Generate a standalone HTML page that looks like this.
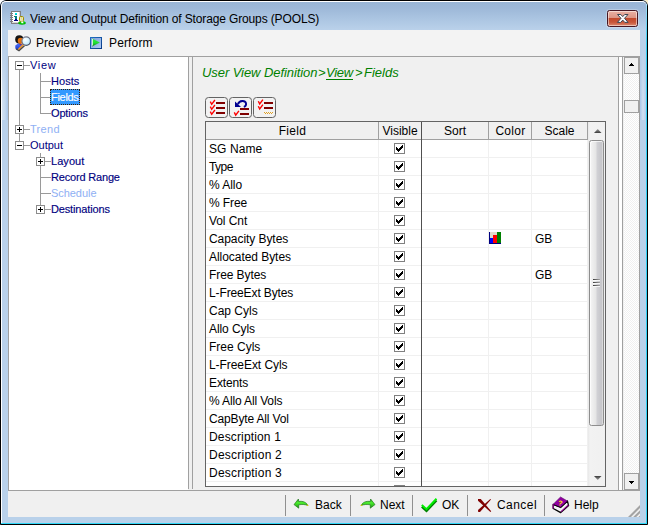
<!DOCTYPE html>
<html><head><meta charset="utf-8"><title>View and Output Definition of Storage Groups (POOLS)</title>
<style>
html,body{margin:0;padding:0;}
body{width:648px;height:525px;overflow:hidden;background:#fff;font-family:"Liberation Sans",Arial,sans-serif;font-size:12px;color:#000;position:relative;}
div,span,i,b,svg{position:absolute;box-sizing:border-box;}
svg{overflow:visible;}
#win{left:0;top:0;width:648px;height:525px;border-radius:6px 6px 0 0;overflow:hidden;
 background:linear-gradient(to bottom,#98b4d5 0px,#9db8d8 8px,#aac4e1 18px,#bad1ea 30px,#b9d1ea 100%);}
#win .edge{left:0;top:0;right:0;bottom:0;border:1px solid #000;border-radius:6px 6px 0 0;}
#win .wl{left:1px;top:1px;width:646px;height:523px;border-radius:5px 5px 0 0;border-left:1px solid #fff;border-top:1px solid #fff;}
#win .cr{left:646px;top:4px;width:1px;height:520px;background:linear-gradient(to bottom,#a8e0f8 0,#30d0f6 40px,#30d4f8 100%);}
#win .cb2{left:1px;top:523px;width:646px;height:1px;background:#30d8f8;}
#win .gl{top:44px;height:76px;width:6px;-webkit-mask-image:linear-gradient(to bottom,transparent 0,#000 75%);mask-image:linear-gradient(to bottom,transparent 0,#000 75%);}
#title{left:30px;top:10px;font-size:12px;line-height:18px;letter-spacing:-0.13px;white-space:nowrap;color:#000;}
#close{left:607px;top:10px;width:31px;height:17px;border:1px solid #471622;border-radius:2.5px;
 background:linear-gradient(to bottom,#e9b0a3 0%,#dc9484 47%,#c2492c 50%,#c8563a 75%,#dd8a70 100%);box-shadow:inset 0 0 0 1px rgba(255,255,255,.5),0 0 0 1px rgba(255,255,255,.25);}
#client{left:8px;top:30px;width:632px;height:487px;background:#f0f0f0;}
.tb{top:36px;font-size:12px;line-height:14px;white-space:nowrap;}
#tree{left:8px;top:56px;width:180px;height:434px;background:#fff;border-left:1px solid #a0a0a0;border-top:1px solid #a0a0a0;}
.tn{white-space:nowrap;color:#000080;line-height:16px;height:16px;font-size:11px;}
.t1{left:30px;letter-spacing:-0.2px;}
.t2{left:51px;letter-spacing:-0.2px;-webkit-text-stroke:0.15px #000080;}
.dis{color:#8fb0f4;}
.t2.dis{-webkit-text-stroke:0 transparent;}
.ln{background:#9a9a9a;}
.box{width:9px;height:9px;border:1px solid #8c8c8c;background:#fff;}
.box i{left:1px;top:3px;width:5px;height:1px;background:#000;}
.box b{left:3px;top:1px;width:1px;height:5px;background:#000;}
.hd{top:65px;font-size:13px;font-style:italic;color:#008000;line-height:16px;white-space:nowrap;}
.ib{top:97px;width:23px;height:21px;border:1px solid #646464;border-radius:3.5px;background:#f2f2f2;}
#grid{left:205px;top:121px;width:401px;height:366px;border:1px solid #646464;background:#fff;overflow:hidden;}
.hc{top:0;height:18px;line-height:18px;text-align:center;font-size:12px;background:#f0f0f0;border-right:1px solid #a0a0a0;border-bottom:1px solid #a0a0a0;}
.row{left:0;width:382px;height:18px;border-bottom:1px solid #f0f0f0;}
.row span{left:3px;top:0;line-height:18px;font-size:12px;white-space:nowrap;}
.cb{left:188px;top:3px;width:11px;height:11px;border:1px solid #808080;background:#fff;}
.vl{top:18px;width:1px;bottom:0;background:#f0f0f0;}
.btn{top:498px;font-size:12px;line-height:14px;white-space:nowrap;}
.sep{top:495px;width:1px;height:21px;background:#909090;}
.trk{background-color:#fff;background-image:linear-gradient(45deg,#f0f0f0 25%,transparent 25%,transparent 75%,#f0f0f0 75%),linear-gradient(45deg,#f0f0f0 25%,transparent 25%,transparent 75%,#f0f0f0 75%);background-size:2px 2px;background-position:0 0,1px 1px;}
.sbb{left:624px;width:16px;height:17px;background:#f0f0f0;border:1px solid #a0a0a0;border-right-width:2px;}
</style></head><body>
<div style="left:644px;top:0;width:4px;height:4px;background:#fdf0c8"></div>
<div id="win"><div class="gl" style="left:2px;background:linear-gradient(to right,#d4e2f2,#c4d8ee 50%,#a9c5e8)"></div><div class="gl" style="left:640px;background:linear-gradient(to right,#a9c5e8,#d2e0f1 50%,#b4cceb)"></div><div class="edge"></div><div class="wl"></div><div class="cr"></div><div class="cb2"></div></div>
<svg style="left:10px;top:11px" width="16" height="14" viewBox="0 0 16 14" shape-rendering="crispEdges">
<rect x="1" y="0" width="10" height="13" fill="#808080"/><rect x="2" y="1" width="8" height="11" fill="#fff"/>
<rect x="9" y="1" width="1" height="11" fill="#d8d8d8"/><rect x="2" y="11" width="8" height="1" fill="#d8d8d8"/>
<g fill="#808080"><rect x="0" y="2" width="3" height="1"/><rect x="0" y="4" width="3" height="1"/><rect x="0" y="6" width="3" height="1"/><rect x="0" y="8" width="3" height="1"/><rect x="0" y="10" width="3" height="1"/></g>
<rect x="5" y="2" width="2" height="1" fill="#00e8e8"/><rect x="5" y="3" width="2" height="1" fill="#00c0c0"/>
<rect x="4" y="5" width="3" height="1" fill="#008080"/><rect x="5" y="6" width="2" height="2" fill="#008080"/>
<rect x="5" y="8" width="2" height="1" fill="#000080"/><rect x="4" y="9" width="4" height="1" fill="#000080"/>
<g shape-rendering="auto"><ellipse cx="12" cy="12" rx="3.8" ry="1.7" fill="#00b000"/><ellipse cx="12" cy="11.6" rx="3" ry="1" fill="#00d800"/>
<rect x="9.5" y="5.5" width="4" height="5" rx="1.2" fill="#e4e4d0" stroke="#a09000" stroke-width="1"/>
<rect x="11" y="6.5" width="1" height="1" fill="#f0e000"/><rect x="11.5" y="8.5" width="1" height="1" fill="#f0e000"/>
<path d="M11,10.5 L13,10.5 L13.5,12.3 L11.5,12.3 Z" fill="#fff"/></g>
</svg>
<div id="title">View and Output Definition of Storage Groups (POOLS)</div>
<div id="close"></div>
<svg style="left:617px;top:14px" width="12" height="9" viewBox="0 0 12 9">
<path d="M0.5,0.5 L3.8,0.5 L5.75,2.6 L7.7,0.5 L11,0.5 L7.5,4.3 L11.1,8.4 L7.8,8.4 L5.75,6.1 L3.7,8.4 L0.4,8.4 L4,4.3 Z" fill="#fbfbfc" stroke="#3b4654" stroke-width="1" stroke-linejoin="round"/></svg>
<div id="client"></div><div style="left:8px;top:30px;width:632px;height:26px;background:#f3f3f3"></div>
<svg style="left:15px;top:35px" width="16" height="16" viewBox="0 0 16 16">
<defs><radialGradient id="lens" cx="0.4" cy="0.35" r="0.7"><stop offset="0" stop-color="#fff"/><stop offset="0.6" stop-color="#d4f2ff"/><stop offset="1" stop-color="#a8dcf8"/></radialGradient>
<linearGradient id="rim" x1="0" y1="0" x2="1" y2="1"><stop offset="0" stop-color="#8a8c9c"/><stop offset="1" stop-color="#3e4050"/></linearGradient><linearGradient id="bod" x1="0" y1="0" x2="0" y2="1"><stop offset="0" stop-color="#4a6cff"/><stop offset="1" stop-color="#1c3cc0"/></linearGradient></defs>
<path d="M0.3,10.5 L3,8.6 L7.5,9 L8.5,11 L5,14.5 L2.5,15 L0.3,13.5 Z" fill="url(#bod)"/>
<path d="M1,14 L4,15.6 L9.5,10.8" fill="none" stroke="#4a4a4a" stroke-width="1.3"/>
<circle cx="4.3" cy="4.4" r="4.1" fill="#141414"/>
<ellipse cx="5.6" cy="5.8" rx="2.9" ry="3" fill="#e8730e"/>
<path d="M4.2,8.6 L6.8,8.9 L6.2,9.8 L4.6,9.6 Z" fill="#a01818"/>
<path d="M8.4,9.6 L3.8,14" stroke="#f59a23" stroke-width="1.5" stroke-linecap="round"/>
<circle cx="11.2" cy="6.1" r="4.3" fill="url(#lens)" stroke="url(#rim)" stroke-width="1.2"/>
</svg>
<div class="tb" style="left:36px">Preview</div>
<svg style="left:90px;top:37px" width="12" height="12" viewBox="0 0 12 12">
<defs><linearGradient id="pf" x1="0" y1="0" x2="1" y2="1"><stop offset="0" stop-color="#7f9cd6"/><stop offset="1" stop-color="#aecdf7"/></linearGradient>
<linearGradient id="pb" x1="0" y1="0" x2="1" y2="1"><stop offset="0" stop-color="#1f6fc4"/><stop offset="1" stop-color="#0a3a86"/></linearGradient>
<linearGradient id="pg" x1="0" y1="0" x2="0" y2="1"><stop offset="0" stop-color="#2cf040"/><stop offset="0.55" stop-color="#22dd33"/><stop offset="1" stop-color="#0c7a18"/></linearGradient></defs>
<rect x="0.5" y="0.5" width="11" height="11" fill="url(#pf)" stroke="url(#pb)" stroke-width="1"/>
<path d="M2,1.6 L9.9,5.6 L2,9.6 Z" fill="url(#pg)"/><rect x="2" y="2" width="0.8" height="6.6" fill="#f4fff4"/>
</svg>
<div class="tb" style="left:109px;letter-spacing:0.15px">Perform</div>
<div style="left:8px;top:56px;width:632px;height:1px;background:#a0a0a0"></div>
<div id="tree"></div>
<div class="ln" style="left:19px;top:70px;width:1px;height:71px"></div>
<div class="ln" style="left:24px;top:65px;width:6px;height:1px"></div>
<div class="ln" style="left:24px;top:129px;width:6px;height:1px"></div>
<div class="ln" style="left:24px;top:145px;width:6px;height:1px"></div>
<div class="box" style="left:15px;top:61px"><i></i></div>
<div class="box" style="left:15px;top:125px"><i></i><b></b></div>
<div class="box" style="left:15px;top:141px"><i></i></div>
<div class="ln" style="left:40px;top:73px;width:1px;height:41px"></div>
<div class="ln" style="left:40px;top:81px;width:11px;height:1px"></div>
<div class="ln" style="left:40px;top:97px;width:11px;height:1px"></div>
<div class="ln" style="left:40px;top:113px;width:11px;height:1px"></div>
<div class="ln" style="left:40px;top:153px;width:1px;height:57px"></div>
<div class="ln" style="left:40px;top:161px;width:11px;height:1px"></div>
<div class="ln" style="left:40px;top:177px;width:11px;height:1px"></div>
<div class="ln" style="left:40px;top:193px;width:11px;height:1px"></div>
<div class="ln" style="left:40px;top:209px;width:11px;height:1px"></div>
<div class="box" style="left:36px;top:157px"><i></i><b></b></div>
<div class="box" style="left:36px;top:205px"><i></i><b></b></div>
<div class="tn t1" style="top:57px;letter-spacing:0.7px">View</div>
<div class="tn t2" style="top:73px;letter-spacing:0.05px">Hosts</div>
<div style="left:50px;top:89px;width:30px;height:16px;background:#3399ff;border:1px dotted #402000"></div>
<div class="tn t2" style="top:89px;letter-spacing:-0.3px;color:#fff;-webkit-text-stroke:0.15px #fff">Fields</div>
<div class="tn t2" style="top:105px;letter-spacing:-0.15px">Options</div>
<div class="tn t1 dis" style="top:121px;letter-spacing:0.3px">Trend</div>
<div class="tn t1" style="top:137px;letter-spacing:0px">Output</div>
<div class="tn t2" style="top:153px;letter-spacing:0.05px">Layout</div>
<div class="tn t2" style="top:169px;letter-spacing:-0.18px">Record Range</div>
<div class="tn t2 dis" style="top:185px;letter-spacing:-0.05px">Schedule</div>
<div class="tn t2" style="top:201px;letter-spacing:-0.15px">Destinations</div>
<div style="left:188px;top:57px;width:1px;height:432px;background:#a0a0a0"></div>
<div style="left:192px;top:57px;width:1px;height:432px;background:#a0a0a0"></div>
<div class="hd" style="left:202px;letter-spacing:-0.07px">User View Definition</div>
<div class="hd" style="left:318px">&gt;</div>
<div class="hd" style="left:326px;letter-spacing:-0.3px">View</div><div style="left:326px;top:79px;width:27px;height:1px;background:#008000"></div>
<div class="hd" style="left:355px">&gt;</div>
<div class="hd" style="left:364px">Fields</div>
<div class="ib" style="left:205px"></div>
<svg style="left:205px;top:97px" width="23" height="21" viewBox="205 97 23 21"><path d="M210.3,101.6 l1.4,2.7 l3.2,-4.3" fill="none" stroke="#ff0000" stroke-width="1.4"/><path d="M210.3,106.6 l1.4,2.7 l3.2,-4.3" fill="none" stroke="#ff0000" stroke-width="1.4"/><path d="M210.3,111.6 l1.4,2.7 l3.2,-4.3" fill="none" stroke="#ff0000" stroke-width="1.4"/><rect x="216" y="102" width="9" height="2" fill="#800000" shape-rendering="crispEdges"/><rect x="216" y="107" width="9" height="2" fill="#800000" shape-rendering="crispEdges"/><rect x="216" y="112" width="9" height="2" fill="#800000" shape-rendering="crispEdges"/></svg>
<div class="ib" style="left:229px"></div>
<svg style="left:229px;top:97px" width="23" height="21" viewBox="229 97 23 21"><path d="M234.3,112.4 l1.4,2.7 l3.2,-4.3" fill="none" stroke="#ff0000" stroke-width="1.4"/><rect x="240" y="108" width="9" height="2" fill="#800000" shape-rendering="crispEdges"/><rect x="240" y="113" width="9" height="2" fill="#800000" shape-rendering="crispEdges"/><path d="M235,101.5 L235,107 L241,107 Z" fill="#000090"/><path d="M238,104.3 C239,100.4 245.9,99.6 246.1,104 C246.1,105.6 245.4,106.4 243.8,106.8" fill="none" stroke="#000090" stroke-width="1.9"/></svg>
<div class="ib" style="left:253px"></div>
<svg style="left:253px;top:97px" width="23" height="21" viewBox="253 97 23 21"><path d="M258.3,101.2 l1.4,2.7 l3.2,-4.3" fill="none" stroke="#ff0000" stroke-width="1.4"/><path d="M258.3,106.2 l1.4,2.7 l3.2,-4.3" fill="none" stroke="#ff0000" stroke-width="1.4"/><rect x="264" y="102" width="9" height="2" fill="#800000" shape-rendering="crispEdges"/><rect x="264" y="107" width="9" height="2" fill="#800000" shape-rendering="crispEdges"/><g fill="#e0a020" shape-rendering="crispEdges"><rect x="264" y="112" width="1" height="1"/><rect x="265" y="113" width="1" height="1"/><rect x="266" y="112" width="1" height="1"/><rect x="267" y="113" width="1" height="1"/><rect x="268" y="112" width="1" height="1"/><rect x="269" y="113" width="1" height="1"/><rect x="270" y="112" width="1" height="1"/><rect x="271" y="113" width="1" height="1"/><rect x="272" y="112" width="1" height="1"/></g></svg>
<div id="grid">
<div class="hc" style="left:0px;width:173px;letter-spacing:0.3px;padding-left:1px">Field</div>
<div class="hc" style="left:173px;width:43px">Visible</div>
<div class="hc" style="left:216px;width:67px">Sort</div>
<div class="hc" style="left:283px;width:43px;letter-spacing:0.3px;padding-left:1px">Color</div>
<div class="hc" style="left:326px;width:56px">Scale</div>
<div class="row" style="top:18px"><span style="letter-spacing:0.08px">SG Name</span><div class="cb"><svg style="left:1px;top:1px" width="7" height="7" viewBox="0 0 7 7" shape-rendering="crispEdges"><path d="M0,2h1v1h1v1h1v-1h1v-1h1v-1h1v-1h1v3h-1v1h-1v1h-1v1h-1v1h-1v-1h-1v-1h-1z" fill="#000"/></svg></div></div>
<div class="row" style="top:36px"><span style="letter-spacing:-0.55px">Type</span><div class="cb"><svg style="left:1px;top:1px" width="7" height="7" viewBox="0 0 7 7" shape-rendering="crispEdges"><path d="M0,2h1v1h1v1h1v-1h1v-1h1v-1h1v-1h1v3h-1v1h-1v1h-1v1h-1v1h-1v-1h-1v-1h-1z" fill="#000"/></svg></div></div>
<div class="row" style="top:54px"><span style="letter-spacing:-0.05px">% Allo</span><div class="cb"><svg style="left:1px;top:1px" width="7" height="7" viewBox="0 0 7 7" shape-rendering="crispEdges"><path d="M0,2h1v1h1v1h1v-1h1v-1h1v-1h1v-1h1v3h-1v1h-1v1h-1v1h-1v1h-1v-1h-1v-1h-1z" fill="#000"/></svg></div></div>
<div class="row" style="top:72px"><span style="letter-spacing:-0.1px">% Free</span><div class="cb"><svg style="left:1px;top:1px" width="7" height="7" viewBox="0 0 7 7" shape-rendering="crispEdges"><path d="M0,2h1v1h1v1h1v-1h1v-1h1v-1h1v-1h1v3h-1v1h-1v1h-1v1h-1v1h-1v-1h-1v-1h-1z" fill="#000"/></svg></div></div>
<div class="row" style="top:90px"><span style="letter-spacing:-0.08px">Vol Cnt</span><div class="cb"><svg style="left:1px;top:1px" width="7" height="7" viewBox="0 0 7 7" shape-rendering="crispEdges"><path d="M0,2h1v1h1v1h1v-1h1v-1h1v-1h1v-1h1v3h-1v1h-1v1h-1v1h-1v1h-1v-1h-1v-1h-1z" fill="#000"/></svg></div></div>
<div class="row" style="top:108px"><span style="letter-spacing:-0.06px">Capacity Bytes</span><div class="cb"><svg style="left:1px;top:1px" width="7" height="7" viewBox="0 0 7 7" shape-rendering="crispEdges"><path d="M0,2h1v1h1v1h1v-1h1v-1h1v-1h1v-1h1v3h-1v1h-1v1h-1v1h-1v1h-1v-1h-1v-1h-1z" fill="#000"/></svg></div><span style="left:329px">GB</span><svg style="left:283px;top:2px" width="12" height="12" viewBox="0 0 12 12" shape-rendering="crispEdges"><rect x="0" y="0" width="12" height="12" fill="#000080"/><rect x="1" y="0" width="7" height="6" fill="#e0dccc"/><rect x="1" y="6" width="3" height="5" fill="#0000ff"/><rect x="4" y="3" width="4" height="8" fill="#ff0000"/><rect x="8" y="0" width="4" height="11" fill="#008000"/></svg></div>
<div class="row" style="top:126px"><span style="letter-spacing:-0.05px">Allocated Bytes</span><div class="cb"><svg style="left:1px;top:1px" width="7" height="7" viewBox="0 0 7 7" shape-rendering="crispEdges"><path d="M0,2h1v1h1v1h1v-1h1v-1h1v-1h1v-1h1v3h-1v1h-1v1h-1v1h-1v1h-1v-1h-1v-1h-1z" fill="#000"/></svg></div></div>
<div class="row" style="top:144px"><span style="letter-spacing:-0.08px">Free Bytes</span><div class="cb"><svg style="left:1px;top:1px" width="7" height="7" viewBox="0 0 7 7" shape-rendering="crispEdges"><path d="M0,2h1v1h1v1h1v-1h1v-1h1v-1h1v-1h1v3h-1v1h-1v1h-1v1h-1v1h-1v-1h-1v-1h-1z" fill="#000"/></svg></div><span style="left:329px">GB</span></div>
<div class="row" style="top:162px"><span style="letter-spacing:-0.12px">L-FreeExt Bytes</span><div class="cb"><svg style="left:1px;top:1px" width="7" height="7" viewBox="0 0 7 7" shape-rendering="crispEdges"><path d="M0,2h1v1h1v1h1v-1h1v-1h1v-1h1v-1h1v3h-1v1h-1v1h-1v1h-1v1h-1v-1h-1v-1h-1z" fill="#000"/></svg></div></div>
<div class="row" style="top:180px"><span>Cap Cyls</span><div class="cb"><svg style="left:1px;top:1px" width="7" height="7" viewBox="0 0 7 7" shape-rendering="crispEdges"><path d="M0,2h1v1h1v1h1v-1h1v-1h1v-1h1v-1h1v3h-1v1h-1v1h-1v1h-1v1h-1v-1h-1v-1h-1z" fill="#000"/></svg></div></div>
<div class="row" style="top:198px"><span style="letter-spacing:-0.09px">Allo Cyls</span><div class="cb"><svg style="left:1px;top:1px" width="7" height="7" viewBox="0 0 7 7" shape-rendering="crispEdges"><path d="M0,2h1v1h1v1h1v-1h1v-1h1v-1h1v-1h1v3h-1v1h-1v1h-1v1h-1v1h-1v-1h-1v-1h-1z" fill="#000"/></svg></div></div>
<div class="row" style="top:216px"><span>Free Cyls</span><div class="cb"><svg style="left:1px;top:1px" width="7" height="7" viewBox="0 0 7 7" shape-rendering="crispEdges"><path d="M0,2h1v1h1v1h1v-1h1v-1h1v-1h1v-1h1v3h-1v1h-1v1h-1v1h-1v1h-1v-1h-1v-1h-1z" fill="#000"/></svg></div></div>
<div class="row" style="top:234px"><span style="letter-spacing:-0.06px">L-FreeExt Cyls</span><div class="cb"><svg style="left:1px;top:1px" width="7" height="7" viewBox="0 0 7 7" shape-rendering="crispEdges"><path d="M0,2h1v1h1v1h1v-1h1v-1h1v-1h1v-1h1v3h-1v1h-1v1h-1v1h-1v1h-1v-1h-1v-1h-1z" fill="#000"/></svg></div></div>
<div class="row" style="top:252px"><span style="letter-spacing:-0.12px">Extents</span><div class="cb"><svg style="left:1px;top:1px" width="7" height="7" viewBox="0 0 7 7" shape-rendering="crispEdges"><path d="M0,2h1v1h1v1h1v-1h1v-1h1v-1h1v-1h1v3h-1v1h-1v1h-1v1h-1v1h-1v-1h-1v-1h-1z" fill="#000"/></svg></div></div>
<div class="row" style="top:270px"><span style="letter-spacing:-0.14px">% Allo All Vols</span><div class="cb"><svg style="left:1px;top:1px" width="7" height="7" viewBox="0 0 7 7" shape-rendering="crispEdges"><path d="M0,2h1v1h1v1h1v-1h1v-1h1v-1h1v-1h1v3h-1v1h-1v1h-1v1h-1v1h-1v-1h-1v-1h-1z" fill="#000"/></svg></div></div>
<div class="row" style="top:288px"><span style="letter-spacing:-0.16px">CapByte All Vol</span><div class="cb"><svg style="left:1px;top:1px" width="7" height="7" viewBox="0 0 7 7" shape-rendering="crispEdges"><path d="M0,2h1v1h1v1h1v-1h1v-1h1v-1h1v-1h1v3h-1v1h-1v1h-1v1h-1v1h-1v-1h-1v-1h-1z" fill="#000"/></svg></div></div>
<div class="row" style="top:306px"><span style="letter-spacing:0.15px">Description 1</span><div class="cb"><svg style="left:1px;top:1px" width="7" height="7" viewBox="0 0 7 7" shape-rendering="crispEdges"><path d="M0,2h1v1h1v1h1v-1h1v-1h1v-1h1v-1h1v3h-1v1h-1v1h-1v1h-1v1h-1v-1h-1v-1h-1z" fill="#000"/></svg></div></div>
<div class="row" style="top:324px"><span style="letter-spacing:0.23px">Description 2</span><div class="cb"><svg style="left:1px;top:1px" width="7" height="7" viewBox="0 0 7 7" shape-rendering="crispEdges"><path d="M0,2h1v1h1v1h1v-1h1v-1h1v-1h1v-1h1v3h-1v1h-1v1h-1v1h-1v1h-1v-1h-1v-1h-1z" fill="#000"/></svg></div></div>
<div class="row" style="top:342px"><span style="letter-spacing:0.23px">Description 3</span><div class="cb"><svg style="left:1px;top:1px" width="7" height="7" viewBox="0 0 7 7" shape-rendering="crispEdges"><path d="M0,2h1v1h1v1h1v-1h1v-1h1v-1h1v-1h1v3h-1v1h-1v1h-1v1h-1v1h-1v-1h-1v-1h-1z" fill="#000"/></svg></div></div>
<div class="row" style="top:360px"><span></span><div class="cb"><svg style="left:1px;top:1px" width="7" height="7" viewBox="0 0 7 7" shape-rendering="crispEdges"><path d="M0,2h1v1h1v1h1v-1h1v-1h1v-1h1v-1h1v3h-1v1h-1v1h-1v1h-1v1h-1v-1h-1v-1h-1z" fill="#000"/></svg></div></div>
<div class="vl" style="left:172px"></div>
<div class="vl" style="left:282px"></div>
<div class="vl" style="left:325px"></div>
<div class="vl" style="left:381px"></div>
<div style="left:215px;top:0;width:1px;bottom:0;background:#505050"></div>
<div style="left:381px;top:0;width:1px;height:18px;background:#a0a0a0"></div>
<div style="left:382px;top:0;width:17px;bottom:0;background:linear-gradient(to right,#e8e8e8 0,#f2f2f2 2px,#f0f0f0 100%)"></div>
<div style="left:383px;top:18px;width:15px;height:286px;border:1px solid #8e8e8e;border-radius:2.5px;background:linear-gradient(to right,#f6f6f6 0,#e4e4e4 48%,#d2d2d6 52%,#c6c6ca 88%,#e4e4e4 100%);box-shadow:inset 1px 1px 0 rgba(255,255,255,.7)"></div>
<svg style="left:387px;top:157px" width="8" height="8" viewBox="0 0 8 8" shape-rendering="crispEdges"><defs><linearGradient id="gr" x1="0" y1="0" x2="1" y2="0"><stop offset="0" stop-color="#3c3c3c"/><stop offset="1" stop-color="#a4a4a4"/></linearGradient></defs><g fill="url(#gr)"><rect x="0" y="0" width="7" height="1"/><rect x="0" y="3" width="7" height="1"/><rect x="0" y="6" width="7" height="1"/></g><g fill="#fff" opacity="0.8"><rect x="0" y="1" width="7" height="1"/><rect x="0" y="4" width="7" height="1"/><rect x="0" y="7" width="7" height="1"/></g></svg>
<svg style="left:388px;top:7px" width="8" height="4" viewBox="0 0 8 4"><defs><linearGradient id="ag" x1="0" y1="0" x2="0" y2="1"><stop offset="0" stop-color="#9a9a9a"/><stop offset="1" stop-color="#3c3c3c"/></linearGradient></defs><path d="M0,4 L3.75,0 L7.5,4 Z" fill="url(#ag)"/></svg>
<svg style="left:388px;top:354px" width="8" height="4" viewBox="0 0 8 4"><defs><linearGradient id="ag2" x1="0" y1="0" x2="0" y2="1"><stop offset="0" stop-color="#3c3c3c"/><stop offset="1" stop-color="#9a9a9a"/></linearGradient></defs><path d="M0,0 L3.75,4 L7.5,0 Z" fill="url(#ag2)"/></svg>
</div>
<div style="left:618px;top:57px;width:1px;height:433px;background:#a0a0a0"></div>
<div style="left:619px;top:57px;width:3px;height:433px;background:#fff"></div>
<div style="left:622px;top:57px;width:1px;height:433px;background:#a0a0a0"></div>
<div class="trk" style="left:624px;top:57px;width:15px;height:433px"></div>
<div style="left:639px;top:57px;width:1px;height:433px;background:#a0a0a0"></div>
<div class="sbb" style="top:57px"></div>
<svg style="left:629px;top:63px" width="5" height="3" viewBox="0 0 5 3" shape-rendering="crispEdges"><path d="M2,0h1v1h1v1h1v1h-5v-1h1v-1h1z" fill="#000"/></svg>
<div class="sbb" style="top:473px"></div>
<svg style="left:629px;top:481px" width="5" height="3" viewBox="0 0 5 3" shape-rendering="crispEdges"><path d="M0,0h5v1h-1v1h-1v1h-1v-1h-1v-1h-1z" fill="#000"/></svg>
<div class="sbb" style="top:100px;height:13px"></div>
<div style="left:8px;top:490px;width:632px;height:1px;background:#a0a0a0"></div>
<div class="btn" style="left:315px">Back</div>
<div class="btn" style="left:380px">Next</div>
<div class="btn" style="left:442px">OK</div>
<div class="btn" style="left:497px;letter-spacing:0.45px">Cancel</div>
<div class="btn" style="left:574px">Help</div>
<div class="sep" style="left:285px"></div>
<div class="sep" style="left:350px"></div>
<div class="sep" style="left:412px"></div>
<div class="sep" style="left:467px"></div>
<div class="sep" style="left:544px"></div>
<svg style="left:0;top:0" width="648" height="525" viewBox="0 0 648 525">
<defs><linearGradient id="ga" x1="0" y1="0" x2="0" y2="1"><stop offset="0" stop-color="#1c9a10"/><stop offset="0.4" stop-color="#4ef030"/><stop offset="1" stop-color="#1a9010"/></linearGradient></defs>
<path id="barrow" d="M294,504.6 L298.4,499 L298.6,501.4 C303,501 306.2,502 308,505.6 C305.2,504.3 302,504.3 298.7,504.8 L298.7,508.2 Z" fill="url(#ga)" stroke="#146a10" stroke-width="0.6"/>
<circle cx="307.5" cy="505.2" r="0.8" fill="#e0d000"/>
<g transform="translate(669,0) scale(-1,1)"><path d="M294,504.6 L298.4,499 L298.6,501.4 C303,501 306.2,502 308,505.6 C305.2,504.3 302,504.3 298.7,504.8 L298.7,508.2 Z" fill="url(#ga)" stroke="#146a10" stroke-width="0.6"/><circle cx="307.5" cy="505.2" r="0.8" fill="#e0d000"/></g>
<path d="M421.8,506.8 L426.5,511 L436.5,500.6" fill="none" stroke="#008000" stroke-width="2.2"/>
<path d="M421.8,505 L426.5,509.2 L436.5,498.8" fill="none" stroke="#00ee00" stroke-width="2"/>
<path d="M478,499 L480.8,499 L491.2,511.2 L490.4,512 L478,500.8 Z" fill="#800000"/>
<path d="M478,510 L490.3,499 L491,499.6 L480,512 L478.2,512 Z" fill="#800000"/>
<g stroke-linejoin="round">
<path d="M553.2,504.3 L553.2,508.5 L560.7,512.6 L568.6,505.6 L567.4,501 L560.7,507.2 Z" fill="#f4f4f4" stroke="#000" stroke-width="1.3"/>
<path d="M560.7,512.6 L568.6,505.6 L568.3,504.3 L560.7,511.2 Z" fill="#900090"/>
<path d="M560.5,497 L567.4,501 L560.7,507.2 L553.2,504.3 Z" fill="#9000a0" stroke="#5a0068" stroke-width="0.6"/><path d="M553.6,504.8 L560.7,507.6 L567.2,501.6" fill="none" stroke="#000" stroke-width="0.8"/>
<path d="M553.2,504.3 L553.2,508.5" stroke="#900090" stroke-width="1.2"/>
</g>
<text x="558.3" y="505.3" font-family="Liberation Sans, sans-serif" font-weight="bold" font-size="7" fill="#fff000" transform="rotate(12 560 503)">?</text>
<clipPath id="cc"><rect x="600" y="490" width="40" height="27"/></clipPath><g stroke="#a3a3a3" stroke-width="2.1" clip-path="url(#cc)"><path d="M628.5,518 L641,505.5"/><path d="M633.7,518 L641,510.7"/><path d="M638.9,518 L641,515.9"/></g>
</svg>
</body></html>
